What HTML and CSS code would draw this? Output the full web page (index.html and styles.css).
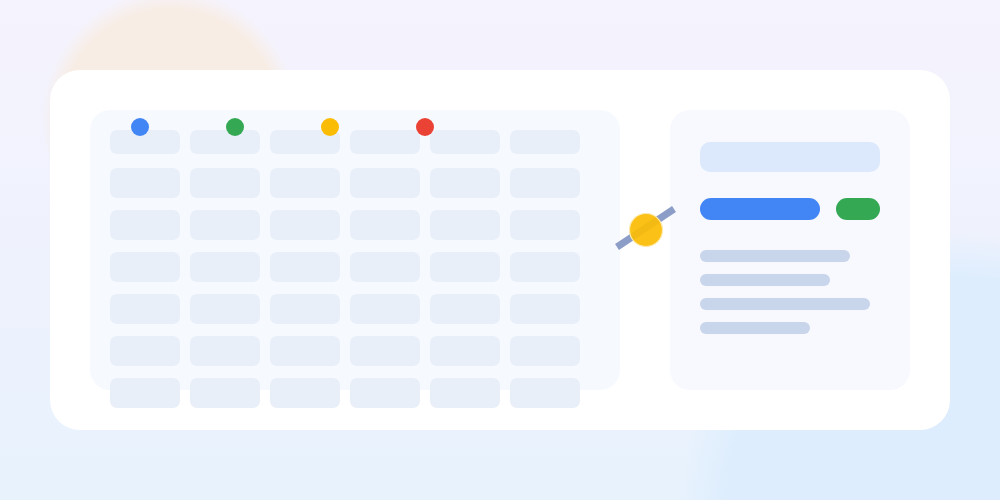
FILE: index.html
```html
<!DOCTYPE html>
<html>
<head>
<meta charset="utf-8">
<link rel="stylesheet" href="styles.css">
</head>
<body>
<div class="card">
  <div class="grid-panel">
    <div class="dots">
      <span class="dot blue"></span>
      <span class="dot green"></span>
      <span class="dot yellow"></span>
      <span class="dot red"></span>
    </div>
    <div class="cells">
      <div class="row head"><i></i><i></i><i></i><i></i><i></i><i></i></div>
      <div class="row"><i></i><i></i><i></i><i></i><i></i><i></i></div>
      <div class="row"><i></i><i></i><i></i><i></i><i></i><i></i></div>
      <div class="row"><i></i><i></i><i></i><i></i><i></i><i></i></div>
      <div class="row"><i></i><i></i><i></i><i></i><i></i><i></i></div>
      <div class="row"><i></i><i></i><i></i><i></i><i></i><i></i></div>
      <div class="row"><i></i><i></i><i></i><i></i><i></i><i></i></div>
    </div>
  </div>
  <div class="connector">
    <svg width="50" height="280" viewBox="0 0 50 280">
      <line x1="-3" y1="137" x2="54" y2="99" stroke="#8c9dc7" stroke-width="7"/>
      <circle cx="26" cy="120" r="16.5" fill="#fbbc05" fill-opacity="0.93" stroke="#fde9a8" stroke-width="1.2"/>
    </svg>
  </div>
  <div class="side-panel">
    <div class="title-bar"></div>
    <div class="pills">
      <span class="pill blue-pill"></span>
      <span class="pill green-pill"></span>
    </div>
    <div class="lines">
      <span class="line" style="width:150px"></span>
      <span class="line" style="width:130px"></span>
      <span class="line" style="width:170px"></span>
      <span class="line" style="width:110px"></span>
    </div>
  </div>
</div>
</body>
</html>
```
FILE: styles.css
```css
html, body {
  margin: 0;
  padding: 0;
}
body {
  width: 1000px;
  height: 500px;
  overflow: hidden;
  font-family: "Liberation Sans", Arial, sans-serif;
  background:
    radial-gradient(circle at 170px 118px, #f8ede4 0, #f8ede4 108px, rgba(248,237,228,0) 128px),
    radial-gradient(circle at 955px 505px, #ddedfd 0, #ddedfd 225px, rgba(221,237,253,0) 275px),
    linear-gradient(180deg, #f5f3fd 0%, #eef2fd 55%, #e7f2fd 100%);
  padding-top: 70px;
  box-sizing: border-box;
}
.card {
  margin: 0 50px;
  height: 360px;
  box-sizing: border-box;
  padding: 40px;
  background: #ffffff;
  border-radius: 30px;
  display: flex;
}
.grid-panel {
  position: relative;
  width: 530px;
  height: 280px;
  flex: none;
  box-sizing: border-box;
  padding: 20px;
  background: #f6f9fe;
  border-radius: 20px;
}
.dots {
  position: absolute;
  left: 41px;
  top: 8px;
  display: flex;
  gap: 77px;
}
.dot {
  width: 18px;
  height: 18px;
  border-radius: 50%;
  display: block;
}
.dot.blue { background: #4285f4; }
.dot.green { background: #34a853; }
.dot.yellow { background: #fbbc05; }
.dot.red { background: #ea4335; }
.cells {
  display: flex;
  flex-direction: column;
  gap: 12px;
}
.row {
  display: flex;
  gap: 10px;
}
.row i {
  display: block;
  width: 70px;
  height: 30px;
  background: #e9eff8;
  border-radius: 7px;
}
.row.head {
  margin-bottom: 2px;
}
.row.head i {
  height: 24px;
}
.connector {
  position: relative;
  z-index: 1;
  width: 50px;
  height: 280px;
  flex: none;
}
.connector svg {
  display: block;
  overflow: visible;
}
.side-panel {
  width: 240px;
  height: 280px;
  flex: none;
  box-sizing: border-box;
  padding: 32px 30px;
  background: #f7f9fe;
  border-radius: 20px;
  display: flex;
  flex-direction: column;
}
.title-bar {
  height: 30px;
  background: #dce9fc;
  border-radius: 10px;
}
.pills {
  margin-top: 26px;
  display: flex;
  justify-content: space-between;
}
.pill {
  display: block;
  height: 22px;
  border-radius: 11px;
}
.blue-pill { width: 120px; background: #4285f4; }
.green-pill { width: 44px; background: #34a853; }
.lines {
  margin-top: 30px;
  display: flex;
  flex-direction: column;
  gap: 12px;
}
.line {
  display: block;
  height: 12px;
  background: #c8d5eb;
  border-radius: 6px;
}
```
